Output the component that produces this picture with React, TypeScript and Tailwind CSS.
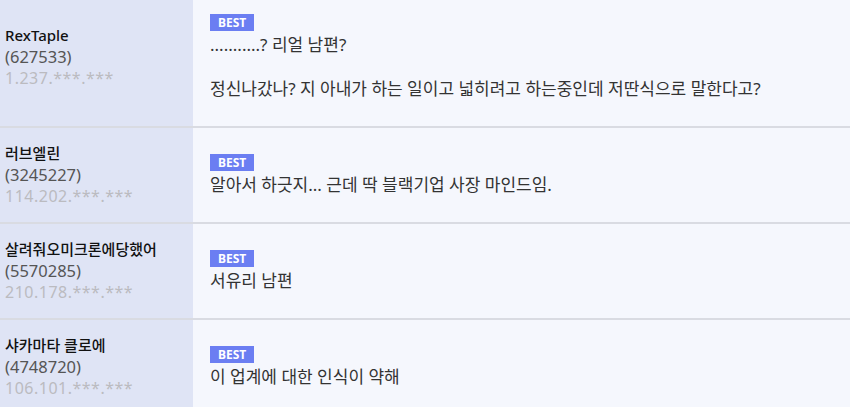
import React from "react";

type Comment = {
  name: string;
  id: string;
  ip: string;
  lines: string[];
};

const comments: Comment[] = [
  {
    name: "RexTaple",
    id: "(627533)",
    ip: "1.237.***.***",
    lines: [
      "...........? 리얼 남편?",
      "",
      "정신나갔나? 지 아내가 하는 일이고 넓히려고 하는중인데 저딴식으로 말한다고?",
    ],
  },
  {
    name: "러브엘린",
    id: "(3245227)",
    ip: "114.202.***.***",
    lines: ["알아서 하긋지... 근데 딱 블랙기업 사장 마인드임."],
  },
  {
    name: "살려줘오미크론에당했어",
    id: "(5570285)",
    ip: "210.178.***.***",
    lines: ["서유리 남편"],
  },
  {
    name: "샤카마타 클로에",
    id: "(4748720)",
    ip: "106.101.***.***",
    lines: ["이 업계에 대한 인식이 약해"],
  },
];

const CommentRow: React.FC<{ c: Comment }> = ({ c }) => (
  <div className="flex border-b-2 border-[#d9dbe2]">
    <div className="w-[193px] shrink-0 bg-[#dfe4f5] px-[5px] py-[12px] flex flex-col justify-center leading-[21.5px]">
      <p className="text-[15px] font-medium text-[#111]">{c.name}</p>
      <p className="text-[16.5px] text-[#555]">{c.id}</p>
      <p className="text-[16px] text-[#bbbbc0] tracking-[0.5px]">{c.ip}</p>
    </div>
    <div className="flex-1 bg-[#f5f7fd] pl-[17px] pr-4 py-[26px] flex flex-col justify-center">
      <span className="self-start bg-[#6b7ef2] text-white text-[12px] font-bold leading-[17px] px-[8px] mb-[3px]">
        BEST
      </span>
      {c.lines.map((line, i) => (
        <p key={i} className="text-[17px] leading-[22px] text-[#333] min-h-[22px]">
          {line}
        </p>
      ))}
    </div>
  </div>
);

export default function App() {
  return (
    <div
      className="w-[850px] h-[407px] overflow-hidden bg-[#f5f7fd]"
      style={{ fontFamily: '"Noto Sans", "Noto Sans CJK KR", sans-serif' }}
    >
      <div className="-mt-[12px]">
        {comments.map((c) => (
          <CommentRow key={c.name} c={c} />
        ))}
      </div>
    </div>
  );
}
